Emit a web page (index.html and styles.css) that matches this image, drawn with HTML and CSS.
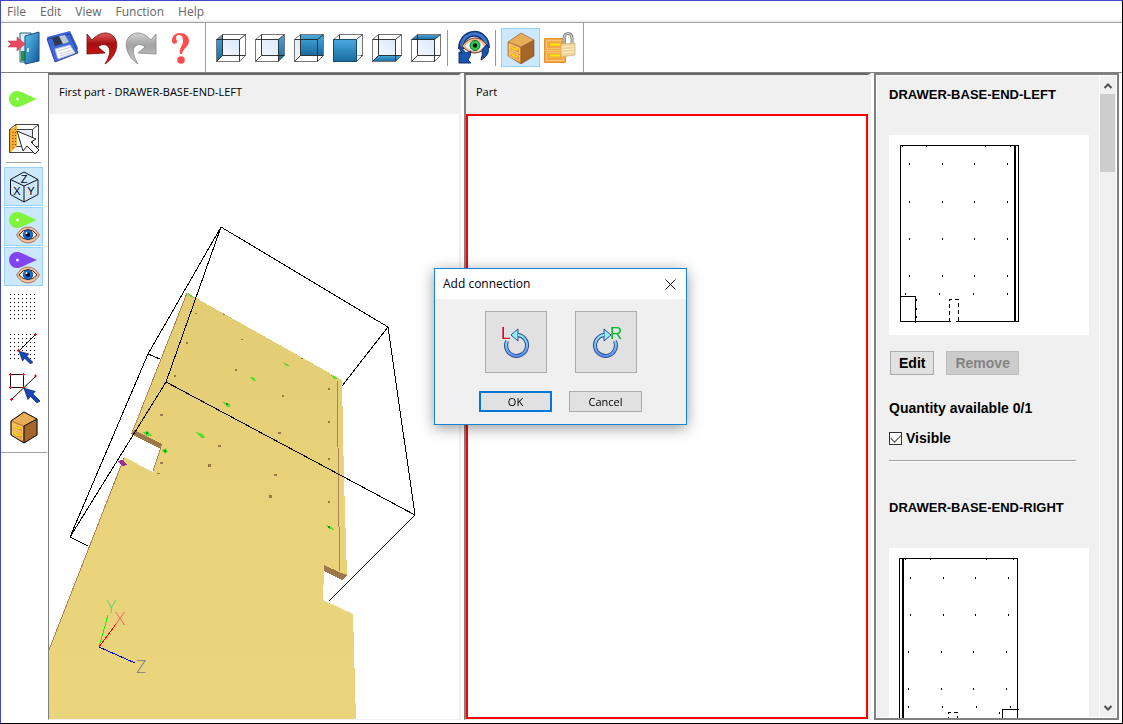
FILE: index.html
```html
<!DOCTYPE html>
<html lang="en">
<head>
<meta charset="utf-8">
<title>Add connection</title>
<link rel="stylesheet" href="styles.css">
</head>
<body>
<svg class="defs" aria-hidden="true">
  <defs>
    <linearGradient id="face" x1="0" y1="0" x2="0" y2="1"><stop offset="0" stop-color="#49a9dd"/><stop offset="1" stop-color="#176a9f"/></linearGradient>
    <linearGradient id="glass" x1="1" y1="0" x2="0" y2="1"><stop offset="0" stop-color="#dbe8fc"/><stop offset="1" stop-color="#f4f8ff"/></linearGradient>
    <linearGradient id="red" x1="0" y1="0" x2="0" y2="1"><stop offset="0" stop-color="#e65a5a"/><stop offset=".35" stop-color="#a50f0f"/><stop offset="1" stop-color="#f01818"/></linearGradient>
    <linearGradient id="grey" x1="0" y1="0" x2="0" y2="1"><stop offset="0" stop-color="#d2d2d2"/><stop offset=".4" stop-color="#a2a2a2"/><stop offset="1" stop-color="#cfcfcf"/></linearGradient>
    <linearGradient id="door" x1="0" y1="0" x2="1" y2="1"><stop offset="0" stop-color="#5ec4ee"/><stop offset="1" stop-color="#0f5699"/></linearGradient>
    <linearGradient id="ring" x1="0" y1="0" x2="0" y2="1"><stop offset="0" stop-color="#8ff0ff"/><stop offset="1" stop-color="#5a96ff"/></linearGradient>
    <linearGradient id="wood" x1="0" y1="0" x2="1" y2="1"><stop offset="0" stop-color="#f0ae50"/><stop offset="1" stop-color="#dd8f36"/></linearGradient>
    <symbol id="frame" viewBox="0 0 32 32"><path d="M1.500 7.500l6-5h23v21l-6 6h-23z" fill="none" stroke="#777"/><path d="M1.500 7.500h23v22M24.500 7.500l6-5M7.500 2.500v21h23M7.500 23.500l-6 6" fill="none" stroke="#222" stroke-width=".9"/></symbol>
    <symbol id="eye" viewBox="0 0 24 18"><path d="M.5 9Q5 1 12 1t11.500 8q-4.500 8-11.500 8T.5 9z" fill="#f0bd9a" stroke="#9a6240" stroke-width=".8"/><path d="M3 9q4-5.500 9-5.500t9 5.500q-4 4.500-9 4.500t-9-4.500z" fill="#fff" stroke="#4a2412"/><circle cx="12" cy="8.700" r="4.800" fill="#176ecb" stroke="#0b2c66" stroke-width=".7"/><circle cx="12" cy="8.700" r="2.200" fill="#001030"/><circle cx="10.500" cy="7" r="1" fill="#fff"/></symbol>
    <symbol id="pin" viewBox="0 0 28 16"><path d="M8 0c4 0 6 2 20 8C14 14 12 16 8 16A8 8 0 0 1 8 0z" fill="currentColor"/><circle cx="8.500" cy="8" r="1.500" fill="#fff" opacity=".85"/></symbol>
    <symbol id="cabinet" viewBox="0 0 32 32"><path d="M3 10L16 1l13 7-13 7z" fill="#e9ad58"/><path d="M3 10l13 5v17L3 24z" fill="url(#wood)"/><path d="M16 15l13-7v16l-13 8z" fill="#a4662a"/><path d="M3 10L16 1l13 7v16l-13 8-13-8zM3 10l13 5v17M16 15l13-7" fill="none" stroke="#8a5418" stroke-width=".6"/><path d="M4.500 12.500l10 4v5l-10-4zM4.500 19.500l10 4v5l-10-4z" fill="none" stroke="#ffd58c" stroke-width=".8"/><path d="M6 14.500q3 4 7 2.500M6 21.500q3 4 7 2.500" fill="none" stroke="#ffe000" stroke-width="1.500"/></symbol>
    <symbol id="arrow" viewBox="0 0 20 18"><path d="M0 0l14 4-3 3 9 9-4 2-8-8-3 4z" fill="#1746b8" stroke="#0a2468"/></symbol>
    <pattern id="grid" x="0" y="0" width="4" height="4" patternUnits="userSpaceOnUse"><path d="M0 0h1v1H0z" fill="#000"/></pattern>
  </defs>
</svg>

<div class="window">
  <nav class="menu">
    <button>File</button><button>Edit</button><button>View</button><button>Function</button><button>Help</button>
  </nav>

  <div class="toolbar" role="toolbar" aria-label="Main">
    <div class="group">
      <button class="tool" aria-label="Exit"><svg viewBox="0 0 32 32"><path d="M12 1h11v29H12z" fill="#d9edf9" stroke="#285f88"/><path d="M13 19h6v10h-6z" fill="#259735"/><path d="M17 4l14-4v29l-14 3z" fill="url(#door)" stroke="#174b7f"/><path d="M20 16v4" stroke="#eaf8ff" stroke-width="1.500"/><path d="M0 9h9V5l8 7-8 7v-4H0l3-3z" fill="#ed4660" stroke="#c0405a" stroke-width=".6"/></svg></button>
      <button class="tool" aria-label="Save"><svg viewBox="0 0 32 32"><path d="M0 8l23-6 8 17-1 3-22 7-2-1z" transform="translate(0 -3)" fill="#3a63d6"/><path d="M0 7l23-5 8 19-23 9z" fill="#3f67dc" stroke="#1c3792" stroke-width=".8"/><path d="M5 6l13-3 4 7-14 4z" fill="#303b4d"/><path d="M12 4l6-1 4 7-6 2z" fill="#bfc8d4"/><path d="M8 17l15-4 5 8-17 6z" fill="#fff" stroke="#b6c0dc"/><path d="M11 19l13-4M12 22l13-4M13 24l13-4" stroke="#c9ccd8"/></svg></button>
      <button class="tool" aria-label="Undo"><svg viewBox="0 0 32 32"><path d="M1 2l5 6C13 0 22-1 27 4c7 6 4 20-8 28 5-8 7-16 1-19-3-1-6 0-8 2l7 6-18 1z" fill="url(#red)" stroke="#6d0808" stroke-width=".8"/></svg></button>
      <button class="tool" aria-label="Redo"><svg viewBox="0 0 32 32"><path d="M31 2l-5 6C19 0 10-1 5 4c-7 6-4 20 8 28-5-8-7-16-1-19 3-1 6 0 8 2l-7 6 18 1z" fill="url(#grey)" stroke="#868686" stroke-width=".8"/></svg></button>
      <button class="tool" aria-label="Help"><svg viewBox="0 0 32 32"><path d="M8 9c0-5 3-8 8-8 5 0 9 3 9 8 0 6-6 7-7 13h-2c-1-7 3-8 3-13 0-4-1-6-4-6-2 0-3 1-3 3s1 2 1 4-5 3-5-1z" fill="#ff4c4c"/><circle cx="17" cy="28" r="3.800" fill="#ff4c4c"/></svg></button>
    </div>
    <div class="group views">
      <button class="tool" aria-label="Left view"><svg viewBox="0 0 32 32"><path d="M7.500 7.500h17v17h-17z" fill="url(#glass)"/><path d="M1.500 7.500l6-5v21l-6 6z" fill="url(#face)"/><use href="#frame"/></svg></button>
      <button class="tool" aria-label="Right view"><svg viewBox="0 0 32 32"><path d="M7.500 7.500h17v17h-17z" fill="url(#glass)"/><path d="M24.500 7.500l6-5v21l-6 6z" fill="url(#face)"/><use href="#frame"/></svg></button>
      <button class="tool" aria-label="Back view"><svg viewBox="0 0 32 32"><path d="M1.500 7.500h6v16l-6 6z" fill="url(#glass)"/><path d="M7.500 2.500h23v21h-23z" fill="url(#face)"/><use href="#frame"/></svg></button>
      <button class="tool" aria-label="Front view"><svg viewBox="0 0 32 32"><use href="#frame"/><path d="M25 7.500l5-4v19l-5 5z" fill="url(#glass)" opacity=".6"/><path d="M1.500 7.500h23v22h-23z" fill="url(#face)" stroke="#17496c"/></svg></button>
      <button class="tool" aria-label="Bottom view"><svg viewBox="0 0 32 32"><path d="M7.500 7.500h17v17h-17z" fill="url(#glass)"/><path d="M7.500 23.500h23l-6 6h-23z" fill="url(#face)"/><use href="#frame"/></svg></button>
      <button class="tool" aria-label="Top view"><svg viewBox="0 0 32 32"><path d="M7.500 7.500h17v17h-17z" fill="url(#glass)"/><path d="M7.500 2.500h23l-6 5h-23z" fill="url(#face)"/><use href="#frame"/></svg></button>
    </div>
    <div class="group">
      <button class="tool" aria-label="Rotate view"><svg viewBox="0 0 32 32"><path d="M3 17C3-3 29-3 29 16" fill="none" stroke="#123476" stroke-width="6"/><path d="M3 17C3-3 29-3 29 16" fill="none" stroke="#3d76cd" stroke-width="3"/><path d="M4 14q6-8 13-8t12 7q-5 8-12 8T4 14z" fill="#f0b793" stroke="#72391c"/><path d="M7 14q4-5 10-5t9 5q-4 5-9 5t-10-5z" fill="#fff"/><circle cx="17" cy="13.500" r="5" fill="#2ccb54" stroke="#116c2a"/><circle cx="17" cy="13.500" r="2.200" fill="#031506"/><path d="M1 13q0 5 3 8l-3-1v11h12l-3-3q3-4 3-9l-5 2zM29 12q5 10-6 16 2-6 1-10z" fill="#1a55ad" stroke="#0c2f70"/></svg></button>
    </div>
    <div class="group">
      <button class="tool on" aria-label="Show cabinet" aria-pressed="true"><svg viewBox="0 0 32 32"><use href="#cabinet"/></svg></button>
      <button class="tool" aria-label="Lock cabinet"><svg viewBox="0 0 32 32"><path d="M.5 6.500h21v24H.5z" fill="#f2a844" stroke="#e29228"/><path d="M.5 18.500h21M2.500 8.500h17v8h-17zM2.500 20.500h17v8h-17z" fill="none" stroke="#f9c474"/><path d="M6 12.500h10M6 23.500h10" stroke="#ffec00" stroke-width="2"/><path d="M20 13V6c0-6 8-6 8 0v7" fill="none" stroke="#858585" stroke-width="3"/><path d="M20 13V6c0-6 8-6 8 0v7" fill="none" stroke="#ddd"/><path d="M17 12l14-1v12l-14 2z" fill="#eed39b" stroke="#cdb07a" stroke-width=".7"/><path d="M18 15l12-1M18 18l12-1M18 21l12-1" stroke="#fff0c6"/></svg></button>
    </div>
  </div>

  <div class="work">
    <div class="sidebar">
      <div class="rail" role="toolbar" aria-label="Tools">
        <button class="tool" aria-label="Add pin"><svg class="green" viewBox="0 0 32 32"><use href="#pin" x="1" y="8" width="28" height="16"/></svg></button>
        <button class="tool" aria-label="Select face"><svg viewBox="0 0 32 32"><path d="M1.500 6.500l6-5h23v23l-6 5h-23zM7.500 1.500v22h23M1.500 29.500l6-6M1.500 6.500h23v23M24.500 6.500l6-5" fill="none" stroke="#444"/><path d="M10 7h14v14H10z" fill="#e6ecf8"/><path d="M2 7l7-5v21l-6 6H2z" fill="#f5ae2b"/><path d="M5 9v16M7.500 6v17" stroke="#6b4300" stroke-dasharray="1 2"/><path d="M9 8l19 8-5 3 8 8-4 4-8-8-4 5z" fill="#fff" stroke="#222"/></svg></button>
        <hr>
        <button class="tool on" aria-label="Axes cube" aria-pressed="true"><svg viewBox="0 0 32 32"><path d="M2.500 8.500L16 1l14 7.500v15L16 31 2.500 23.500zM2.500 8.500L16 15l14-6.500M16 15v16" fill="none" stroke="#111"/><g class="cube-letters"><text x="16" y="12">Z</text><text x="9" y="24">X</text><text x="23" y="24">Y</text></g></svg></button>
        <button class="tool on" aria-label="Show green pins" aria-pressed="true"><svg class="green" viewBox="0 0 32 32"><use href="#pin" x="1" y="1" width="28" height="16"/><use href="#eye" x="8" y="15" width="24" height="18"/></svg></button>
        <button class="tool on" aria-label="Show purple pins" aria-pressed="true"><svg class="purple" viewBox="0 0 32 32"><use href="#pin" x="1" y="1" width="28" height="16"/><use href="#eye" x="8" y="15" width="24" height="18"/></svg></button>
        <button class="tool" aria-label="Grid"><svg viewBox="0 0 32 32"><path d="M0 0h25v25H0z" transform="translate(2 3)" fill="url(#grid)"/></svg></button>
        <button class="tool" aria-label="Snap to grid"><svg viewBox="0 0 32 32"><path d="M0 0h25v25H0z" transform="translate(2 3)" fill="url(#grid)"/><path d="M11 20L27 4" stroke="#222"/><path d="M26 3.500h3M27.500 2v3M9 19.500h3M10.500 18v3" stroke="#f00"/><use href="#arrow" x="11" y="20" width="14" height="13"/></svg></button>
        <button class="tool" aria-label="Snap to object"><svg viewBox="0 0 32 32"><path d="M2.500 3.500h13v13h-13zM3 29L28 5" fill="none" stroke="#111"/><path d="M1 3.500h3M2.500 2v3M14 3.500h3M15.500 2v3M1 16.500h3M2.500 15v3M14 16.500h3M15.500 15v3M2 28.500h3M3.500 27v3M26 5h3M27.500 3.500v3" stroke="#f00"/><use href="#arrow" x="16" y="17" width="16" height="15"/></svg></button>
        <button class="tool" aria-label="Cabinet"><svg viewBox="0 0 32 32"><use href="#cabinet"/><path d="M3 10L16 1l13 7v16l-13 8-13-8zM16 15v17M16 15l13-7" fill="none" stroke="#111"/></svg></button>
      </div>
    </div>

    <section class="pane first">
      <h2>First part - DRAWER-BASE-END-LEFT</h2>
      <svg class="scene" viewBox="49 114 410 605" preserveAspectRatio="xMinYMin slice" role="img" aria-label="3D view of the drawer base">
        <defs><linearGradient id="board" x1="0" y1="0" x2="0" y2="1"><stop offset="0" stop-color="#e2cd74"/><stop offset=".5" stop-color="#e8d27a"/><stop offset="1" stop-color="#ead57d"/></linearGradient></defs>
        <g shape-rendering="crispEdges">
          <path d="M187 293L342 380 344 480 347 576 324 566V571L323 600 353 614 356 720H49V650L121 465 124 457 153 472 161 447 132 433z" fill="url(#board)"/>
          <path d="M187 293L132 433M124 458L49 650M161 447L153 471" fill="none" stroke="#ac8455" stroke-width="1"/>
          <path d="M134 430L162 444 161 449 131 434z" fill="#9c7747"/>
          <path d="M324 565L341 573 347 575 342 580 324 571z" fill="#9c7747"/>
          <path d="M337 379L338.500 480 339.500 571" fill="none" stroke="#ac8455" stroke-width="1"/>
          <g fill="#9b7947"><path d="M195 313h2v1h-2zM223 314h2v1h-2zM241 339h2v1h-2zM186 342h2v2h-2zM235 369h2v2h-2zM301 358h2v1h-2zM174 375h2v2h-2zM282 395h2v2h-2zM328 388h2v2h-2zM328 421h2v2h-2zM160 414h3v2h-3zM278 432h3v2h-3zM218 445h3v2h-3zM208 464h3v3h-3zM274 474h3v2h-3zM160 462h3v2h-3zM157 473h3v1h-3zM269 495h3v3h-3zM328 458h2v2h-2zM328 501h2v2h-2z"/></g>
          <g fill="#5cdb37"><path d="M188 293l5 3 1 2-5-2zM283 362l4 2 2 2h-3zM250 377l5 1 1 3h-3zM223 402l7 2v3h-3zM331 375l5 2 1 2h-3zM196 432l7 2 2 4h-4zM143 432l5-1 4 5h-6zM162 450l4-2 2 4-3 2zM326 525l5 2 3 3-5-1z"/></g>
          <path d="M146 432h2v2h-2zM164 450h2v2h-2zM328 526h2v2h-2zM226 403h2v2h-2z" fill="#238f16"/>
          <path d="M117 461l5-1 5 5-5 1z" fill="#96308e"/>
          <g fill="none" stroke="#000"><path d="M160 359L148 354 221 227 388 327 415 515 329 601M388 327L342 386M221 227L166 382 415 515M148 354L70 537 166 382M70 537L88 546"/></g>
          <path d="M99 647L108 615" stroke="#0f0"/><path d="M99 647L116 624" stroke="red"/><path d="M99 647L135 663" stroke="#00f"/>
        </g>
        <g class="axis-letters"><text x="111" y="613" fill="#56d16c">Y</text><text x="120" y="625" fill="#ee5d5d">X</text><text x="141" y="673" fill="#80768a">Z</text></g>
      </svg>
    </section>

    <section class="pane second">
      <h2>Part</h2>
      <div class="canvas"></div>
    </section>

    <aside class="parts">
      <div class="list">
        <article>
          <h3>DRAWER-BASE-END-LEFT</h3>
          <svg class="plan" viewBox="0 0 200 200" role="img" aria-label="Drawing of DRAWER-BASE-END-LEFT">
            <path d="M62 186.500H11.500v-176h118v176H67M11.500 161.500h15v26" fill="none" stroke="#000"/>
            <path d="M125 10h2v177h-2z"/>
            <path d="M60.500 187v-22.500h9V187" fill="none" stroke="#000" stroke-dasharray="4 3"/>
            <path d="M20 28h1v2h-1zM53 28h1v2h-1zM85 28h1v2h-1zM118 28h1v2h-1zM20 66h1v2h-1zM53 66h1v2h-1zM85 66h1v2h-1zM118 66h1v2h-1zM20 103h1v2h-1zM53 103h1v2h-1zM85 103h1v2h-1zM118 103h1v2h-1zM20 140h1v2h-1zM53 140h1v2h-1zM85 140h1v2h-1zM118 140h1v2h-1zM16 158h1v2h-1zM50 158h1v2h-1zM84 158h1v2h-1zM118 158h1v2h-1zM13 11h1v1h-1zM37 11h1v1h-1zM96 11h1v1h-1zM121 11h1v1h-1zM27 164h1v2h-1zM27 173h1v2h-1zM27 181h1v2h-1z"/>
          </svg>
          <div class="actions"><button>Edit</button><button disabled>Remove</button></div>
          <p>Quantity available 0/1</p>
          <label><input type="checkbox" checked>Visible</label>
          <hr>
        </article>
        <article>
          <h3>DRAWER-BASE-END-RIGHT</h3>
          <svg class="plan" viewBox="0 0 200 200" role="img" aria-label="Drawing of DRAWER-BASE-END-RIGHT">
            <path d="M10.500 186.500v-176h118v176zM113.500 187v-25.500H130" fill="none" stroke="#000"/>
            <path d="M13 10h2v177h-2z"/>
            <path d="M59.500 187v-22.500h9V187" fill="none" stroke="#000" stroke-dasharray="4 3"/>
            <path d="M21 29h1v2h-1zM54 29h1v2h-1zM86 29h1v2h-1zM119 29h1v2h-1zM21 66h1v2h-1zM54 66h1v2h-1zM86 66h1v2h-1zM119 66h1v2h-1zM19 103h1v2h-1zM52 103h1v2h-1zM84 103h1v2h-1zM117 103h1v2h-1zM19 140h1v2h-1zM52 140h1v2h-1zM84 140h1v2h-1zM117 140h1v2h-1zM19 158h1v2h-1zM53 158h1v2h-1zM87 158h1v2h-1zM121 158h1v2h-1zM16 11h1v1h-1zM41 11h1v1h-1zM97 11h1v1h-1zM124 11h1v1h-1zM110 164h1v2h-1z"/>
          </svg>
        </article>
      </div>
      <div class="scroll">
        <button aria-label="Scroll up"><svg viewBox="0 0 10 10"><path d="M1.500 7L5 3.500 8.500 7"/></svg></button>
        <div class="track"><div class="thumb"></div></div>
        <button aria-label="Scroll down"><svg viewBox="0 0 10 10"><path d="M1.500 3L5 6.500 8.500 3"/></svg></button>
      </div>
    </aside>
  </div>
</div>

<div class="overlay">
  <div class="dialog" role="dialog" aria-labelledby="dialog-title">
    <header><h1 id="dialog-title">Add connection</h1><button aria-label="Close"><svg viewBox="0 0 11 11"><path d="M.5.500l10 10M10.500.500l-10 10"/></svg></button></header>
    <div class="choices">
      <button aria-label="Left"><svg viewBox="0 0 40 40"><path d="M11 19a10.500 10.500 0 1 0 11-6" fill="none" stroke="#314b86" stroke-width="4"/><path d="M22 7v12l-7-6z" fill="#8ff0ff" stroke="#314b86"/><path d="M11 19a10.500 10.500 0 1 0 11-6" fill="none" stroke="url(#ring)" stroke-width="2"/><text x="5" y="17" fill="#e00020">L</text></svg></button>
      <button aria-label="Right"><svg viewBox="0 0 40 40"><path d="M29 19a10.500 10.500 0 1 1-11-6" fill="none" stroke="#314b86" stroke-width="4"/><path d="M18 7v12l7-6z" fill="#8ff0ff" stroke="#314b86"/><path d="M29 19a10.500 10.500 0 1 1-11-6" fill="none" stroke="url(#ring)" stroke-width="2"/><text x="24" y="17" fill="#08b52c">R</text></svg></button>
    </div>
    <div class="confirm"><button class="default">OK</button><button>Cancel</button></div>
  </div>
</div>
</body>
</html>
```
FILE: styles.css
```css
* { box-sizing: border-box; }
body { margin: 0; font: 11px/16px "Open Sans", "Noto Sans", sans-serif; color: #000; background: #fff; }
button { font: inherit; color: inherit; padding: 0; border: 0; background: none; }
svg { display: block; }
h1, h2, h3, p { margin: 0; font-weight: normal; }
.defs { position: absolute; width: 0; height: 0; }

.window { height: 100vh; display: flex; flex-direction: column; border: 1px solid #4046c8; border-right-color: #000; border-bottom-color: #000; }
.menu { display: flex; gap: 14px; height: 22px; padding: 0 6px; border-bottom: 1px solid #a0a0a0; background: linear-gradient(#fff 19px, #f0f0f0 19px); font-size: 12px; color: #666; flex: none; }

.toolbar { display: flex; flex: none; height: 50px; border-bottom: 1px solid #808080; }
.group { display: flex; align-items: center; padding: 0 6px 0 3px; border-right: 1px solid #a0a0a0; }
.group.views { padding: 0 2px 0 5px; border: 0; }
.group.views + .group { padding: 0 2px 0 4px; border: 0; }
.group.views::after, .group.views + .group::after { content: ""; width: 1px; height: 36px; background: #999; margin-left: 2px; }
.group:last-child { padding: 0 4px 0 3px; }
.tool { width: 39px; height: 39px; display: grid; place-items: center; border: 1px solid transparent; flex: none; }
.tool svg { width: 32px; height: 32px; overflow: visible; }
.tool.on { background: #cce8ff; border-color: #99d1ff; }
.green { color: #80f53d; }
.purple { color: #8244ee; }
.cube-letters { font: 11px "Liberation Sans", sans-serif; text-anchor: middle; }

.work { flex: 1; min-height: 0; display: grid; grid-template-columns: 47px 410fr 407fr 245fr; column-gap: 3px; padding: 0 3px 3px 0; }
.sidebar { margin-right: 1px; }
.rail { display: flex; flex-direction: column; gap: 1px; padding: 6px 0 6px 3px; border-bottom: 1px solid #a0a0a0; }
.rail hr { width: 35px; height: 1px; margin: 3px 0 3px 2px; border: 0; background: #a0a0a0; }

.pane { min-width: 0; min-height: 0; display: flex; flex-direction: column; border: solid; border-width: 2px 3px 1px 2px; border-color: #696969 #f0f0f0 #f0f0f0 #808080; background: #fff; }
.first { margin-left: -3px; border-left-width: 1px; border-right-width: 2px; }
.pane h2 { flex: none; height: 39px; padding: 9px 10px; background: #f0f0f0; font-size: 11px; line-height: 16px; }
.scene { flex: 1; width: 100%; min-height: 0; }
.axis-letters { font: 300 17px "Lato", "Liberation Sans", sans-serif; text-anchor: middle; }
.canvas { flex: 1; border: 2px solid #f00; }

.parts { min-height: 0; display: flex; border: 2px solid #808080; box-shadow: inset 1px 1px #fff, inset -1px -1px #fff; background: #f0f0f0; overflow: hidden; }
.list { flex: 1; overflow: hidden; padding: 10px 0 0 13px; font: bold 14px/20px "Liberation Sans", Arial, sans-serif; }
.list h3 { font-size: 13px; line-height: 20px; font-weight: bold; margin-bottom: 30px; }
.list p { font-weight: bold; }
.list article { height: 413px; }
.plan { width: 200px; height: 200px; background: #fff; shape-rendering: crispEdges; }
.actions { display: flex; gap: 12px; margin: 16px 0 23px 1px; }
.actions button { height: 24px; padding: 0 8px; background: #e1e1e1; border: 1px solid #adadad; }
.actions button:disabled { color: #838383; background: #ccc; border-color: #bfbfbf; }
.list label { display: flex; align-items: center; gap: 4px; margin-top: 10px; }
.list input { appearance: none; width: 13px; height: 13px; margin: 0; border: 1px solid #333; background: #fff; display: grid; place-items: center; }
.list input:checked::before { content: ""; width: 9px; height: 5px; margin-bottom: 3px; border: solid #444; border-width: 0 0 1px 1px; transform: rotate(-45deg); }
.list hr { width: 187px; height: 2px; margin: 12px 0 0; border: 0; border-top: 1px solid #a0a0a0; border-bottom: 1px solid #fff; }
.scroll { width: 18px; border-left: 1px solid #fff; padding: 3px 2px 2px 0; display: flex; flex-direction: column; }
.scroll button { height: 16px; display: grid; place-items: center; }
.scroll svg { width: 10px; height: 10px; fill: none; stroke: #505050; stroke-width: 2; }
.track { flex: 1; }
.thumb { height: 78px; background: #cdcdcd; }

.overlay { position: fixed; inset: 0; display: grid; place-items: center; padding: 0 2px 31px 0; pointer-events: none; }
.dialog { width: 253px; pointer-events: auto; border: 1px solid #1883d7; background: #f0f0f0; box-shadow: 0 3px 14px rgba(0, 0, 0, .4); }
.dialog header { height: 30px; display: flex; align-items: center; justify-content: space-between; padding: 0 10px 0 8px; background: #fff; }
.dialog h1 { font-size: 12px; line-height: 16px; }
.dialog header svg { width: 11px; height: 11px; fill: none; stroke: #111; }
.choices { display: flex; justify-content: center; gap: 28px; padding: 12px 0 18px; }
.choices button { width: 62px; height: 62px; display: grid; place-items: center; border: 1px solid #adadad; background: #e1e1e1; }
.choices svg { width: 40px; height: 40px; font: 17px "Liberation Sans", sans-serif; overflow: visible; }
.confirm { display: flex; justify-content: center; gap: 17px; padding-bottom: 12px; }
.confirm button { width: 73px; height: 21px; border: 1px solid #adadad; background: #e1e1e1; font-size: 11px; }
.confirm .default { border: 2px solid #0078d7; }
```
